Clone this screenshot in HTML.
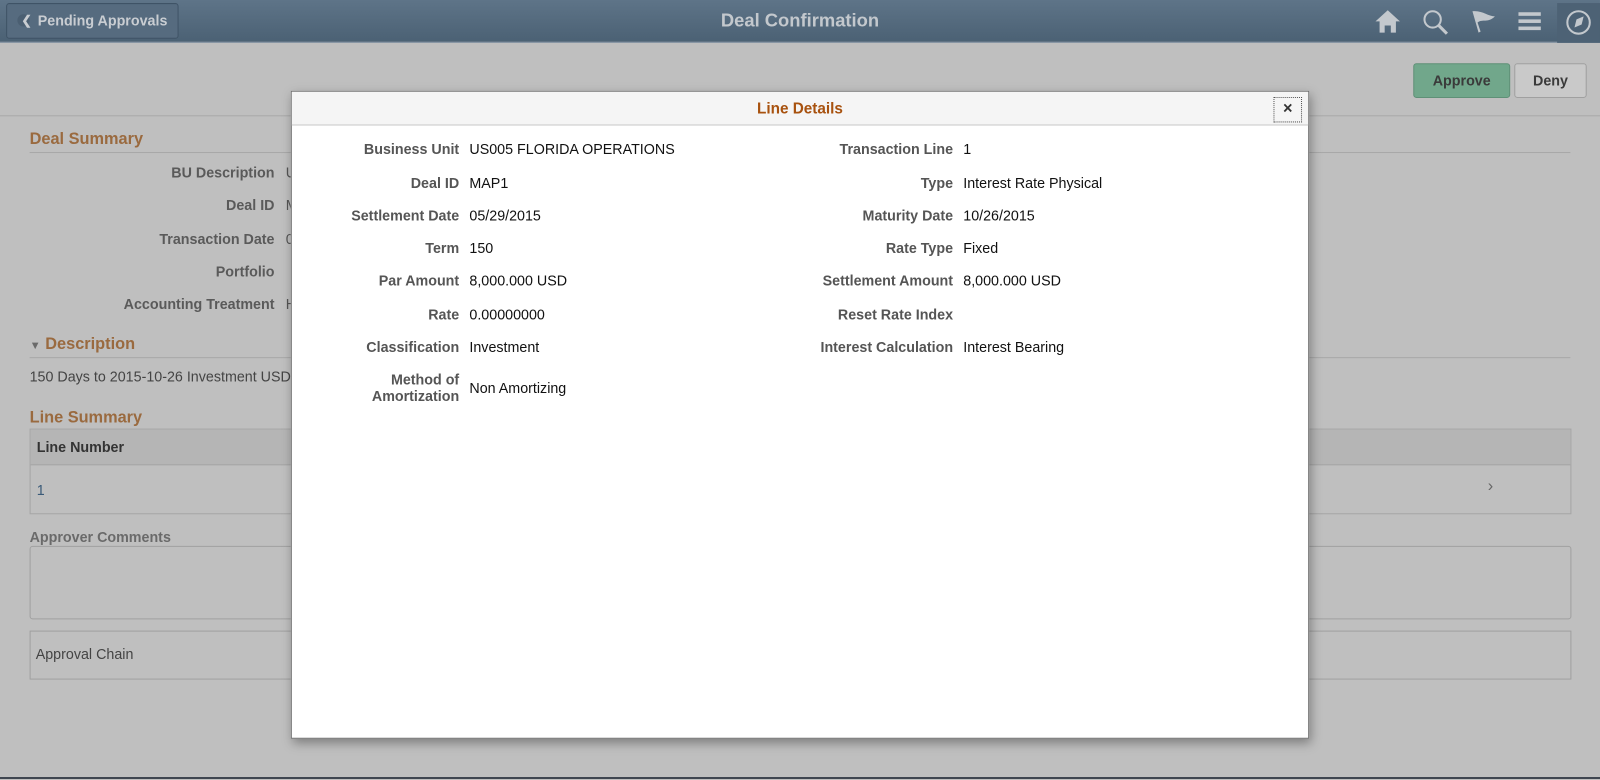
<!DOCTYPE html>
<html><head><meta charset="utf-8"><style>
*{margin:0;padding:0;box-sizing:border-box}
body{width:1600px;height:779px;overflow:hidden;background:#bfbfbf;font-family:"Liberation Sans",Arial,sans-serif;position:relative}
#w{position:absolute;left:0;top:0;width:1568px;height:764px;transform:scale(1.0204);transform-origin:0 0}
.hdr{position:absolute;left:0;top:0;width:1568px;height:42px;background:linear-gradient(#5e7488,#4b6174);border-bottom:1px solid #7f90a0}
.back{position:absolute;left:6px;top:3px;width:169px;height:35px;border:1px solid #3f5366;border-radius:3px;background:#566b7f;color:#c9cdd2;font-weight:bold;font-size:14px;line-height:33px;padding-left:30px}
.back:before{content:"";position:absolute;left:10px;top:10px;width:12px;height:12px;border-radius:50%;background:#4b5f72}
.back span{position:absolute;left:14px;top:0;font-size:12px;color:#c9cdd2}
.title{position:absolute;left:0;width:1568px;top:10px;text-align:center;color:#c3c8cd;font-weight:bold;font-size:18px}
.abs{position:absolute}
.sec{position:absolute;color:#9a6a3f;font-weight:bold;font-size:16px}
.lbl{position:absolute;color:#5a5a5a;font-weight:bold;font-size:14px;text-align:right;width:240px}
.val{position:absolute;left:280px;font-size:14px;color:#555}
.line{position:absolute;height:1px;background:#a8a8a8}
.btn{position:absolute;height:34px;border-radius:3px;font-weight:bold;font-size:14px;line-height:32px;text-align:center;color:#3a3a3a}
.modal{position:absolute;left:285px;top:89px;width:998px;height:635px;background:#fff;border:1px solid #707070;box-shadow:2px 4px 10px rgba(0,0,0,.35)}
.mh{height:33px;background:#f5f5f5;border-bottom:1px solid #c8c8c8;text-align:center;color:#a8520f;font-weight:bold;font-size:15px;line-height:33px}
.x{position:absolute;right:6px;top:5px;width:28px;height:25px;border:1px dotted #555;font-size:16px;line-height:22px;text-align:center;color:#333;font-weight:bold}
.ml{position:absolute;width:300px;text-align:right;font-weight:bold;font-size:14px;color:#555}
.mv{position:absolute;font-size:14px;color:#111}
</style></head><body>
<div id="w">
<div class="hdr">
<div class="back"><span>&#10094;</span>Pending Approvals</div>
<div class="title">Deal Confirmation</div>
<svg class="abs" style="left:1346px;top:8px" width="28" height="26" viewBox="0 0 28 26"><path d="M14 2 L26 13 H22 V24 H17 V17 H11 V24 H6 V13 H2 Z" fill="#c3c8cd"/></svg>
<svg class="abs" style="left:1393px;top:8px" width="28" height="28" viewBox="0 0 28 28"><circle cx="11" cy="11" r="8" stroke="#c3c8cd" stroke-width="2" fill="none"/><path d="M17 17 L25 25" stroke="#c3c8cd" stroke-width="3"/></svg>
<svg class="abs" style="left:1440px;top:8px" width="28" height="28" viewBox="0 0 28 28"><path d="M3 3 L9 24 L11 23 L8 14 C13 10 18 15 25 8 C18 8 13 2 3 3Z" fill="#c3c8cd"/></svg>
<svg class="abs" style="left:1488px;top:10px" width="24" height="22" viewBox="0 0 24 22"><rect y="2" width="22" height="3.5" fill="#c3c8cd"/><rect y="9" width="22" height="3.5" fill="#c3c8cd"/><rect y="16" width="22" height="3.5" fill="#c3c8cd"/></svg>
<div class="abs" style="left:1526px;top:3px;width:42px;height:39px;background:#4d6275"></div>
<svg class="abs" style="left:1533px;top:8px" width="28" height="28" viewBox="0 0 28 28"><circle cx="14" cy="14" r="11" stroke="#c3c8cd" stroke-width="2" fill="none"/><path d="M10 19 L12 11 L19 8 L17 16 Z" fill="#c3c8cd"/></svg>
</div>
<div class="btn" style="left:1385px;top:62px;width:95px;background:#71a78b;border:1px solid #5f9077">Approve</div>
<div class="btn" style="left:1484px;top:62px;width:71px;background:#c9c9c9;border:1px solid #a0a0a0">Deny</div>
<div class="line" style="left:0;top:113px;width:1568px"></div>
<div class="sec" style="left:29px;top:128px">Deal Summary</div>
<div class="line" style="left:29px;top:149px;width:1510px"></div>
<div class="lbl" style="left:29px;top:161px">BU Description</div><div class="val" style="top:161px">US005</div>
<div class="lbl" style="left:29px;top:193px">Deal ID</div><div class="val" style="top:193px">MAP1</div>
<div class="lbl" style="left:29px;top:226px">Transaction Date</div><div class="val" style="top:226px">05/29</div>
<div class="lbl" style="left:29px;top:258px">Portfolio</div>
<div class="lbl" style="left:29px;top:290px">Accounting Treatment</div><div class="val" style="top:290px">Held</div>
<div class="sec" style="left:29px;top:329px"><span style="font-size:11px;color:#6a6a6a">&#9660;</span> Description</div>
<div class="line" style="left:29px;top:350px;width:1510px"></div>
<div class="abs" style="left:29px;top:361px;font-size:14px;color:#444">150 Days to 2015-10-26 Investment USD</div>
<div class="sec" style="left:29px;top:401px">Line Summary</div>
<div class="abs" style="left:29px;top:420px;width:1511px;height:84px;border:1px solid #a5a5a5"></div>
<div class="abs" style="left:30px;top:421px;width:1509px;height:35px;background:#b5b5b5;border-bottom:1px solid #a5a5a5"></div>
<div class="abs" style="left:36px;top:430px;font-size:14px;font-weight:bold;color:#333">Line Number</div>
<div class="abs" style="left:36px;top:472px;font-size:14px;color:#3a5a78">1</div>
<div class="abs" style="left:1458px;top:468px;font-size:16px;color:#666">&#8250;</div>
<div class="abs" style="left:29px;top:518px;font-size:14px;font-weight:bold;color:#6a6a6a">Approver Comments</div>
<div class="abs" style="left:29px;top:535px;width:1511px;height:72px;border:1px solid #a0a0a0;border-radius:3px"></div>
<div class="abs" style="left:29px;top:618px;width:1511px;height:48px;border:1px solid #a0a0a0"></div>
<div class="abs" style="left:35px;top:633px;font-size:14px;color:#444">Approval Chain</div>
<div class="modal">
<div class="mh">Line Details</div>
<div class="x">&#215;</div>
<div class="ml" style="left:-136px;top:48px">Business Unit</div><div class="mv" style="left:174px;top:48px">US005 FLORIDA OPERATIONS</div>
<div class="ml" style="left:-136px;top:81px">Deal ID</div><div class="mv" style="left:174px;top:81px">MAP1</div>
<div class="ml" style="left:-136px;top:113px">Settlement Date</div><div class="mv" style="left:174px;top:113px">05/29/2015</div>
<div class="ml" style="left:-136px;top:145px">Term</div><div class="mv" style="left:174px;top:145px">150</div>
<div class="ml" style="left:-136px;top:177px">Par Amount</div><div class="mv" style="left:174px;top:177px">8,000.000 USD</div>
<div class="ml" style="left:-136px;top:210px">Rate</div><div class="mv" style="left:174px;top:210px">0.00000000</div>
<div class="ml" style="left:-136px;top:242px">Classification</div><div class="mv" style="left:174px;top:242px">Investment</div>
<div class="ml" style="left:-136px;top:274px;line-height:16px">Method of<br>Amortization</div><div class="mv" style="left:174px;top:282px">Non Amortizing</div>
<div class="ml" style="left:348px;top:48px">Transaction Line</div><div class="mv" style="left:658px;top:48px">1</div>
<div class="ml" style="left:348px;top:81px">Type</div><div class="mv" style="left:658px;top:81px">Interest Rate Physical</div>
<div class="ml" style="left:348px;top:113px">Maturity Date</div><div class="mv" style="left:658px;top:113px">10/26/2015</div>
<div class="ml" style="left:348px;top:145px">Rate Type</div><div class="mv" style="left:658px;top:145px">Fixed</div>
<div class="ml" style="left:348px;top:177px">Settlement Amount</div><div class="mv" style="left:658px;top:177px">8,000.000 USD</div>
<div class="ml" style="left:348px;top:210px">Reset Rate Index</div>
<div class="ml" style="left:348px;top:242px">Interest Calculation</div><div class="mv" style="left:658px;top:242px">Interest Bearing</div>
</div>
</div>
<div class="abs" style="left:0;top:777px;width:1600px;height:2px;background:#3f4650"></div>
</body></html>
